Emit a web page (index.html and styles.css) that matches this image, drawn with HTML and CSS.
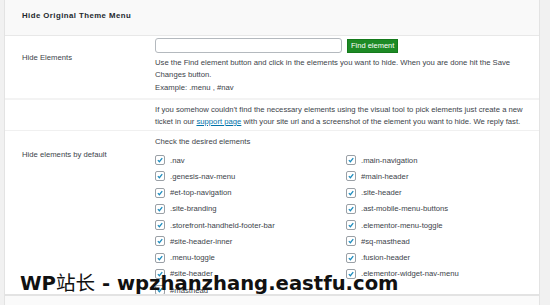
FILE: index.html
```html
<!DOCTYPE html>
<html>
<head>
<meta charset="utf-8">
<link rel="stylesheet" href="styles.css">
</head>
<body>
<div class="wrap">
  <div class="panel">
    <div class="panel-head"><h2 class="title">Hide Original Theme Menu</h2></div>
    <div class="row row-find">
      <div class="label label-find">Hide Elements</div>
      <div class="field">
        <div class="find-line">
          <input class="text-input" type="text">
          <button class="btn-find">Find element</button>
        </div>
        <p class="desc">Use the Find element button and click in the elements you want to hide. When you are done hit the Save Changes button.</p>
        <p class="example">Example: .menu , #nav</p>
      </div>
    </div>
    <div class="row row-help">
      <div class="label"></div>
      <div class="field">
        <p class="desc">If you somehow couldn't find the necessary elements using the visual tool to pick elements just create a new ticket in our <a class="link" href="#">support page</a> with your site url and a screenshot of the element you want to hide. We reply fast.</p>
      </div>
    </div>
    <div class="row row-check">
      <div class="label label-check">Hide elements by default</div>
      <div class="field">
        <p class="check-title">Check the desired elements</p>
        <div class="checks">
          <div class="col">
            <label class="item"><span class="box"><svg viewBox="0 0 10 10"><path d="M2.3 5.2 L4.2 7.1 L7.8 2.6" /></svg></span>.nav</label>
            <label class="item"><span class="box"><svg viewBox="0 0 10 10"><path d="M2.3 5.2 L4.2 7.1 L7.8 2.6" /></svg></span>.genesis-nav-menu</label>
            <label class="item"><span class="box"><svg viewBox="0 0 10 10"><path d="M2.3 5.2 L4.2 7.1 L7.8 2.6" /></svg></span>#et-top-navigation</label>
            <label class="item"><span class="box"><svg viewBox="0 0 10 10"><path d="M2.3 5.2 L4.2 7.1 L7.8 2.6" /></svg></span>.site-branding</label>
            <label class="item"><span class="box"><svg viewBox="0 0 10 10"><path d="M2.3 5.2 L4.2 7.1 L7.8 2.6" /></svg></span>.storefront-handheld-footer-bar</label>
            <label class="item"><span class="box"><svg viewBox="0 0 10 10"><path d="M2.3 5.2 L4.2 7.1 L7.8 2.6" /></svg></span>#site-header-inner</label>
            <label class="item"><span class="box"><svg viewBox="0 0 10 10"><path d="M2.3 5.2 L4.2 7.1 L7.8 2.6" /></svg></span>.menu-toggle</label>
            <label class="item"><span class="box"><svg viewBox="0 0 10 10"><path d="M2.3 5.2 L4.2 7.1 L7.8 2.6" /></svg></span>#site-header</label>
            <label class="item"><span class="box"><svg viewBox="0 0 10 10"><path d="M2.3 5.2 L4.2 7.1 L7.8 2.6" /></svg></span>#masthead</label>
          </div>
          <div class="col">
            <label class="item"><span class="box"><svg viewBox="0 0 10 10"><path d="M2.3 5.2 L4.2 7.1 L7.8 2.6" /></svg></span>.main-navigation</label>
            <label class="item"><span class="box"><svg viewBox="0 0 10 10"><path d="M2.3 5.2 L4.2 7.1 L7.8 2.6" /></svg></span>#main-header</label>
            <label class="item"><span class="box"><svg viewBox="0 0 10 10"><path d="M2.3 5.2 L4.2 7.1 L7.8 2.6" /></svg></span>.site-header</label>
            <label class="item"><span class="box"><svg viewBox="0 0 10 10"><path d="M2.3 5.2 L4.2 7.1 L7.8 2.6" /></svg></span>.ast-mobile-menu-buttons</label>
            <label class="item"><span class="box"><svg viewBox="0 0 10 10"><path d="M2.3 5.2 L4.2 7.1 L7.8 2.6" /></svg></span>.elementor-menu-toggle</label>
            <label class="item"><span class="box"><svg viewBox="0 0 10 10"><path d="M2.3 5.2 L4.2 7.1 L7.8 2.6" /></svg></span>#sq-masthead</label>
            <label class="item"><span class="box"><svg viewBox="0 0 10 10"><path d="M2.3 5.2 L4.2 7.1 L7.8 2.6" /></svg></span>.fusion-header</label>
            <label class="item"><span class="box"><svg viewBox="0 0 10 10"><path d="M2.3 5.2 L4.2 7.1 L7.8 2.6" /></svg></span>.elementor-widget-nav-menu</label>
          </div>
        </div>
      </div>
    </div>
  </div>
  <div class="panel-next"></div>
</div>
<div class="watermark">WP<span class="cjk">站长</span> - wpzhanzhang.eastfu.com</div>
</body>
</html>
```
FILE: styles.css
```css
html, body {
  margin: 0;
  padding: 0;
}
body {
  background: #f1f1f1;
  font-family: "Liberation Sans", Arial, sans-serif;
  font-size: 7.7px;
  color: #3c434a;
  width: 550px;
  height: 305px;
  overflow: hidden;
  position: relative;
}
.wrap {
  padding-left: 4px;
  width: 536px;
}
.panel {
  background: #fff;
  border: 1px solid #e3e3e3;
  border-top: none;
}
.panel-head {
  height: 35px;
  background: #f9f9f9;
  border-bottom: 1px solid #e8e8e8;
  display: flex;
  align-items: center;
  padding-left: 17px;
}
.title {
  margin: 0;
  font-size: 7.8px;
  font-weight: bold;
  letter-spacing: 0.45px;
  color: #23282d;
  padding-bottom: 4px;
}
.row {
  display: grid;
  grid-template-columns: 150px 1fr;
}
.label {
  padding-left: 17px;
  color: #3c434a;
  font-size: 7.7px;
}
.row-find {
  padding: 2px 0 4px;
  border-bottom: 2px solid #f3f3f3;
}
.label-find {
  padding-top: 15px;
}
.find-line {
  display: flex;
  align-items: center;
  gap: 5px;
}
.text-input {
  width: 187px;
  height: 15px;
  box-sizing: border-box;
  border: 1px solid #b4b9be;
  border-radius: 3px;
  margin: 0;
  padding: 0;
  background: #fff;
}
.btn-find {
  height: 14px;
  padding: 0 3px;
  margin: 0;
  background: #1d8a25;
  border: 1px solid #157a1c;
  color: #fff;
  font-family: "Liberation Sans", Arial, sans-serif;
  font-size: 7.5px;
  line-height: 12px;
}
.desc {
  margin: 4px 0 0;
  line-height: 12px;
  width: 375px;
}
.example {
  margin: 1px 0 0;
  line-height: 12px;
}
.row-help {
  padding: 4px 0 2px;
  border-bottom: 1px solid #f0f0f0;
}
.row-help .desc {
  margin: 0;
}
.link {
  color: #0073aa;
  text-decoration: underline;
}
.row-check {
  padding-top: 5px;
  height: 158px;
  overflow: hidden;
}
.label-check {
  padding-top: 14px;
}
.check-title {
  margin: 0 0 4px;
  line-height: 12px;
}
.checks {
  display: grid;
  grid-template-columns: 191px 1fr;
}
.col {
  display: flex;
  flex-direction: column;
}
.item {
  display: flex;
  align-items: center;
  height: 16.25px;
  gap: 5px;
  color: #3c434a;
}
.box {
  width: 8px;
  height: 8px;
  border: 1px solid #9aa0a6;
  border-radius: 2px;
  background: #fff;
  display: inline-flex;
  flex: none;
}
.box svg {
  width: 8px;
  height: 8px;
}
.box path {
  fill: none;
  stroke: #1e8cbe;
  stroke-width: 1.6;
}
.panel-next {
  height: 20px;
  background: #fafafa;
  border: 1px solid #e3e3e3;
}
.watermark {
  position: absolute;
  left: 20px;
  top: 270px;
  font-family: "DejaVu Sans", sans-serif;
  font-weight: bold;
  font-size: 19.6px;
  color: #111;
  line-height: 24px;
  white-space: nowrap;
}
.cjk {
  font-family: "Noto Sans CJK SC", sans-serif;
  font-weight: 400;
}
```
